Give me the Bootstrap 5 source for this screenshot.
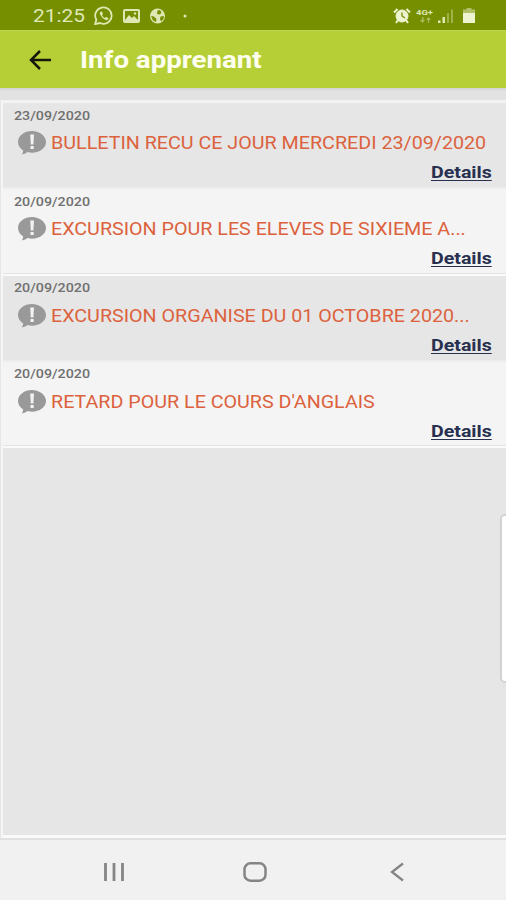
<!DOCTYPE html>
<html lang="fr">
<head>
<meta charset="utf-8">
<meta name="viewport" content="width=device-width, initial-scale=1">
<title>Info apprenant</title>
<link href="https://cdn.jsdelivr.net/npm/bootstrap@5.3.0/dist/css/bootstrap.min.css" rel="stylesheet">
<style>
body{font-family:Roboto,"Liberation Sans",sans-serif;background:#e6e6e6;width:506px;height:900px;overflow:hidden}
svg{display:block;flex:none}
.status-bar{height:30px;background:#768f00;color:#dfe8b4;padding:2px 31px 0 33px}
.clock{font-size:19px;line-height:28px;width:54px;white-space:nowrap}
.stretch{display:inline-block;transform-origin:0 50%;white-space:nowrap}
.clock .stretch{transform:scaleX(1.1)}
.status-left{gap:9px;margin-left:7px}
.status-dot{margin-left:8px}
.status-right{gap:5px}
.app-bar{height:58px;background:#b6cf37;padding:0 28px;border-top:1px solid #bed457}
.app-title{font-size:24px;font-weight:700;color:#fffff0;margin:0 0 0 28px;line-height:30px}
.app-title .stretch{transform:scaleX(1.15)}
.panel{margin-left:1px;border-left:2px solid #f5f5f5;border-top:3px solid #f3f3f3;border-bottom:3px solid #fafafa;background:#e6e6e6}
.gap-strip{height:12px;background:linear-gradient(#d2d2d2,#e2e2e2 3px)}
.notice{height:86.3px;border-bottom:2px solid #ececec;background:#e6e6e6;padding:4.500px 14px 0 11px}
.notice:nth-child(even){background:#f4f4f4;border-bottom:2px solid #fafafa;box-shadow:inset 0 -1px #e4e4e4}
.date{font-size:12px;font-weight:500;line-height:16px;color:#707070}
.date .stretch{transform:scaleX(1.19)}
.subject{height:32px;margin-top:7.500px;padding-left:4px}
.subject-text{font-size:18px;line-height:24px;color:#dc623d;margin-left:5px}
.subject-text .stretch{transform:scaleX(1.094)}
.details{font-size:17px;font-weight:700;line-height:20px;color:#28304f;width:61px;margin-top:-1px}
.details .stretch{transform:scaleX(1.15);text-decoration:underline;text-decoration-thickness:1px;text-underline-offset:2px}
.nav-keys{height:62px;background:#f1f1f1;border-top:2px solid #e1e1e1;color:#858585;padding:4px 102px 0 102px}
.home-key{margin-right:6px}
.edge-handle{right:-4px;top:514px;width:10px;height:169px;border:2px solid #d2d2d2;border-radius:7px;background:#fff}
</style>
</head>
<body class="d-flex flex-column position-relative">
<svg width="0" height="0" class="position-absolute"><symbol id="alert" viewBox="0 0 28 24"><path d="M14 0C6.300 0 0 4.700 0 11c0 3.500 2 6.500 5.200 8.400Q5 22 3.600 23.500q4.200-.8 6.200-2.400 2 .6 4.200.6c7.700 0 14-4.700 14-10.700S21.700 0 14 0Z" fill="#999"/><path d="M12.200 3.500h3.800l-.6 10h-2.600zM12.500 15h3.200v3h-3.200z" fill="#f2f2f2"/></symbol></svg>
<header>
<div class="status-bar d-flex align-items-center">
<div class="clock"><span class="stretch">21:25</span></div>
<div class="status-left d-flex align-items-center">
<svg width="20" height="20" viewBox="0 0 20 20" fill="none" stroke="currentColor"><path d="M1 18.200 2.400 13.800A8.200 8.200 0 1 1 6 17z" stroke-width="1.800" stroke-linejoin="round"/><path d="M6.700 5.400c-1.500 1-1 3 .8 5.200s4 4 5.600 3.500c1.400-.4 1.600-1.600 1.200-2l-2.100-1.200-1.300 1.200c-1.500-.8-2.400-1.800-2.900-3l1-1.100-.9-2.300z" fill="currentColor" stroke="none"/></svg>
<svg width="17" height="14" viewBox="0 0 17 14" fill="none" stroke="currentColor"><rect x="1" y="1" width="15" height="12" rx="1" stroke-width="2"/><path d="m2 11 4-5 3 3 2-2 4 4v2H2z" fill="currentColor" stroke="none"/><circle cx="12" cy="4.500" r="1.200" fill="currentColor" stroke="none"/></svg>
<svg width="17" height="16" viewBox="0 0 17 16"><circle cx="8.500" cy="8" r="7.500" fill="currentColor"/><path d="M8.500 2.500 11 2l1.500 2.500L11 6.500 8 6zM2 8l3 .5L7.500 11 7 14 4 12.500zM11.500 8.500l3.500-.5-.5 3-2.500 2.500-1-2.500z" fill="#768f00"/></svg>
<svg class="status-dot" width="4" height="4" viewBox="0 0 4 4"><circle cx="2" cy="2" r="1.500" fill="currentColor"/></svg>
</div>
<div class="status-right d-flex align-items-center ms-auto">
<svg width="18" height="16" viewBox="0 0 18 16" fill="none" stroke="#eef3d0"><circle cx="9" cy="8" r="6" fill="#eef3d0"/><path d="M1 4.500 4.500 1M17 4.500 13.500 1" stroke-width="2"/><path d="m5 12-2 3M13 12l2 3" stroke-width="2"/><path d="M9 4.500V8l3 2" stroke="#768f00" stroke-width="1.300"/></svg>
<svg width="17" height="16" viewBox="0 0 17 16" fill="currentColor"><text x="0" y="7" font-size="8" font-weight="700" font-family="Roboto" textLength="17" lengthAdjust="spacingAndGlyphs">4G+</text><path d="M4 12h2V9h1.500v3H9l-2.500 3zM10 12l2.500-3 2.500 3h-2v3h-1v-3z" opacity=".5"/></svg>
<svg width="16" height="16" viewBox="0 0 16 16" fill="currentColor"><path d="M0 12.500h2.500V15H0zM4.500 9H7v6H4.500z"/><path d="M9 5h2v10H9zM13 1.500h2V15h-2z" opacity=".4"/></svg>
<svg class="ms-1" width="12" height="16" viewBox="0 0 12 16" fill="#eef3d0"><path d="M3.500 0h5v1.500H12V5H0V1.500h3.500z" opacity=".5"/><path d="M0 5h12v10H0z"/></svg>
</div>
</div>
<div class="app-bar d-flex align-items-center">
<svg width="24" height="22" viewBox="0 0 24 22" fill="none" stroke="#15180a" stroke-width="2.500"><path d="M23 11H3M12 2 3 11l9 9"/></svg>
<h1 class="app-title"><span class="stretch">Info apprenant</span></h1>
</div>
</header>
<div class="gap-strip"></div>
<main class="panel flex-grow-1">
<article class="notice">
<div class="date"><span class="stretch">23/09/2020</span></div>
<div class="subject d-flex"><svg width="28" height="24"><use href="#alert"/></svg><div class="subject-text"><span class="stretch">BULLETIN RECU CE JOUR MERCREDI 23/09/2020</span></div></div>
<div class="details ms-auto"><span class="stretch">Details</span></div>
</article>
<article class="notice">
<div class="date"><span class="stretch">20/09/2020</span></div>
<div class="subject d-flex"><svg width="28" height="24"><use href="#alert"/></svg><div class="subject-text"><span class="stretch">EXCURSION POUR LES ELEVES DE SIXIEME A...</span></div></div>
<div class="details ms-auto"><span class="stretch">Details</span></div>
</article>
<article class="notice">
<div class="date"><span class="stretch">20/09/2020</span></div>
<div class="subject d-flex"><svg width="28" height="24"><use href="#alert"/></svg><div class="subject-text"><span class="stretch">EXCURSION ORGANISE DU 01 OCTOBRE 2020...</span></div></div>
<div class="details ms-auto"><span class="stretch">Details</span></div>
</article>
<article class="notice">
<div class="date"><span class="stretch">20/09/2020</span></div>
<div class="subject d-flex"><svg width="28" height="24"><use href="#alert"/></svg><div class="subject-text"><span class="stretch">RETARD POUR LE COURS D'ANGLAIS</span></div></div>
<div class="details ms-auto"><span class="stretch">Details</span></div>
</article>
</main>
<div class="edge-handle position-absolute"></div>
<footer class="nav-keys d-flex align-items-center justify-content-between">
<svg width="24" height="20" viewBox="0 0 24 20" fill="none" stroke="currentColor" stroke-width="2.800"><path d="M3.500 1v18M12 1v18M20.500 1v18"/></svg>
<svg class="home-key" width="24" height="20" viewBox="0 0 24 20" fill="none" stroke="currentColor" stroke-width="2.500"><rect x="1.500" y="1.300" width="21" height="17.400" rx="6"/></svg>
<svg width="14" height="20" viewBox="0 0 14 20" fill="none" stroke="currentColor" stroke-width="2.300"><path d="M13 1.500 2 10l11 8.500"/></svg>
</footer>
<script src="https://cdn.jsdelivr.net/npm/bootstrap@5.3.0/dist/js/bootstrap.bundle.min.js"></script>
</body>
</html>
